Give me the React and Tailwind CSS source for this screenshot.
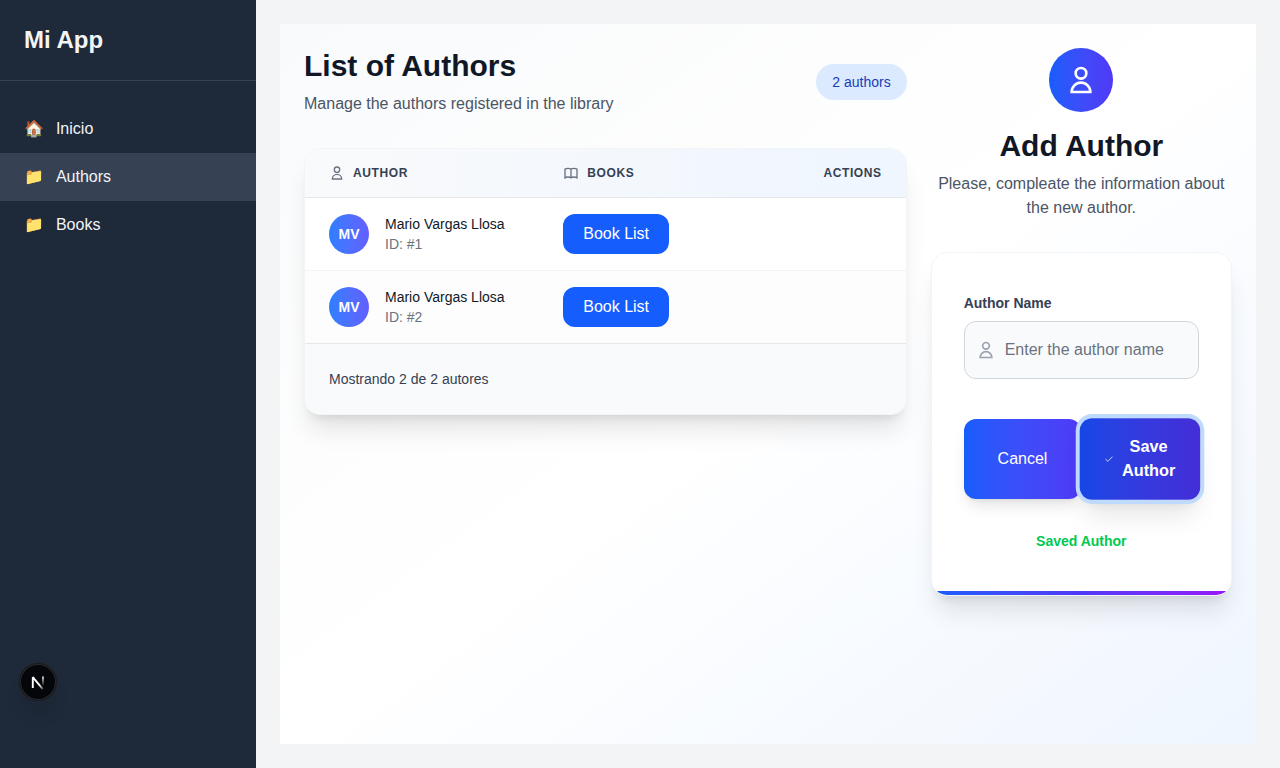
import React from 'react';

const authors = [
  { id: 1, name: 'Mario Vargas Llosa', initials: 'MV' },
  { id: 2, name: 'Mario Vargas Llosa', initials: 'MV' },
];

const links = [
  { label: 'Inicio', icon: '🏠', active: false },
  { label: 'Authors', icon: '📁', active: true },
  { label: 'Books', icon: '📁', active: false },
];

function Icon({ className, d, strokeWidth = 2 }) {
  return (
    <svg className={className} fill="none" stroke="currentColor" viewBox="0 0 24 24" aria-hidden="true">
      <path strokeWidth={strokeWidth} d={d} />
    </svg>
  );
}

const USER = 'M16 7a4 4 0 11-8 0 4 4 0 018 0zM12 14a7 7 0 00-7 7h14a7 7 0 00-7-7z';
const BOOK =
  'M12 6.253v13m0-13C10.832 5.477 9.246 5 7.5 5S4.168 5.477 3 6.253v13C4.168 18.477 5.754 18 7.5 18s3.332.477 4.5 1.253m0-13C13.168 5.477 14.754 5 16.5 5c1.747 0 3.332.477 4.5 1.253v13C19.832 18.477 18.247 18 16.5 18c-1.746 0-3.332.477-4.5 1.253';
const CHECK = 'M21 6L9 18l-6-6';

function Sidebar() {
  return (
    <aside className="w-64 shrink-0 bg-gray-800 text-gray-100">
      <div className="border-b border-gray-700 p-6">
        <h2 className="text-2xl font-bold">Mi App</h2>
      </div>
      <nav className="mt-6">
        {links.map((link) => (
          <a
            key={link.label}
            href="#"
            className={
              link.active
                ? 'flex items-center bg-gray-700 px-6 py-3'
                : 'flex items-center px-6 py-3 hover:bg-gray-700'
            }
          >
            <span className="mr-3">{link.icon}</span>
            {link.label}
          </a>
        ))}
      </nav>
    </aside>
  );
}

function AuthorsTable() {
  return (
    <section>
      <div className="mb-8 flex items-center justify-between">
        <div>
          <h1 className="text-3xl font-bold text-gray-900">List of Authors</h1>
          <p className="mt-2 text-gray-600">Manage the authors registered in the library</p>
        </div>
        <span className="rounded-full bg-blue-100 px-4 py-2 text-sm text-blue-800">
          {authors.length} authors
        </span>
      </div>
      <div className="overflow-hidden rounded-2xl border border-gray-100 bg-white shadow-xl">
        <table className="w-full">
          <thead>
            <tr className="border-b border-gray-200 bg-linear-to-r from-gray-50 to-blue-50 text-xs font-semibold tracking-wider text-gray-700 uppercase">
              <th scope="col" className="w-[39%] px-6 py-4 text-left">
                <div className="flex items-center gap-2">
                  <Icon className="size-4 text-gray-500" d={USER} />
                  Author
                </div>
              </th>
              <th scope="col" className="px-6 py-4 text-left">
                <div className="flex items-center gap-2">
                  <Icon className="size-4 text-gray-500" d={BOOK} />
                  Books
                </div>
              </th>
              <th scope="col" className="px-6 py-4 text-right">Actions</th>
            </tr>
          </thead>
          <tbody className="divide-y divide-gray-100">
            {authors.map((a) => (
              <tr key={a.id} className="even:bg-gray-50/30">
                <td className="px-6 py-4">
                  <div className="flex items-center gap-4">
                    <div className="flex size-10 items-center justify-center rounded-full bg-linear-to-r from-blue-500 to-indigo-500 text-sm font-semibold text-white">
                      {a.initials}
                    </div>
                    <div className="text-sm">
                      <div className="text-gray-900">{a.name}</div>
                      <div className="text-gray-500">ID: #{a.id}</div>
                    </div>
                  </div>
                </td>
                <td className="px-6 py-4">
                  <button type="button" className="block rounded-xl bg-blue-600 px-5 py-2 text-white">
                    Book List
                  </button>
                </td>
                <td className="px-6 py-4" />
              </tr>
            ))}
          </tbody>
        </table>
        <div className="border-t border-gray-200 bg-gray-50 px-6 py-6 text-sm leading-[22px] text-gray-700">
          Mostrando {authors.length} de {authors.length} autores
        </div>
      </div>
    </section>
  );
}

function AuthorForm() {
  return (
    <section>
      <div className="mb-8 text-center">
        <div className="mx-auto mb-4 flex size-16 items-center justify-center rounded-full bg-linear-to-r from-blue-600 to-indigo-600">
          <Icon className="size-8 text-white" d={USER} />
        </div>
        <h2 className="text-3xl font-bold text-gray-900">Add Author</h2>
        <p className="mt-2 text-gray-600">Please, compleate the information about the new author.</p>
      </div>
      <div className="overflow-hidden rounded-2xl border border-gray-100 bg-white shadow-xl">
        <form className="px-8 py-10" onSubmit={(e) => e.preventDefault()}>
          <label htmlFor="author-name" className="mb-2 block text-sm font-semibold text-gray-700">
            Author Name
          </label>
          <div className="relative">
            <div className="pointer-events-none absolute inset-y-0 left-0 flex items-center pl-3">
              <Icon className="size-5 text-gray-400" d={USER} />
            </div>
            <input
              id="author-name"
              type="text"
              placeholder="Enter the author name"
              className="block w-full rounded-xl border border-gray-300 bg-gray-50 py-4 pr-4 pl-10 text-gray-900 placeholder-gray-500"
            />
          </div>
          <div className="mt-10 grid grid-cols-2">
            <button
              type="button"
              className="rounded-xl bg-linear-to-r from-blue-600 to-indigo-600 px-6 py-4 text-white shadow-lg"
            >
              Cancel
            </button>
            <button
              type="submit"
              className="flex scale-[1.02] items-center justify-center gap-2 rounded-xl bg-linear-to-r from-blue-700 to-indigo-700 px-6 py-4 font-semibold text-white shadow-xl ring-4 ring-blue-200"
            >
              <Icon className="h-5 w-5" d={CHECK} />
              <span>Save Author</span>
            </button>
          </div>
          <p className="mt-8 text-center text-sm font-semibold text-green-500">Saved Author</p>
        </form>
        <div className="h-1 bg-linear-to-r from-blue-600 via-indigo-600 to-purple-600" />
      </div>
    </section>
  );
}

function DevBadge() {
  return (
    <button
      type="button"
      aria-label="Open developer tools"
      className="fixed bottom-[68px] left-5 flex size-9 items-center justify-center rounded-full bg-[#05060a] shadow-[0_0_0_1px_#1a1a1a,inset_0_0_0_1px_#2c2c2e,0_16px_24px_-8px_rgba(0,0,0,0.2)]"
    >
      <svg width="36" height="36" viewBox="0 0 36 36" fill="none" aria-hidden="true">
        <defs>
          <linearGradient id="stem" x1="23" y1="12" x2="23" y2="22" gradientUnits="userSpaceOnUse">
            <stop stopColor="#fff" />
            <stop offset="1" stopColor="#fff" stopOpacity="0" />
          </linearGradient>
          <linearGradient id="diagonal" x1="18" y1="18" x2="24" y2="26" gradientUnits="userSpaceOnUse">
            <stop offset="0.3" stopColor="#fff" />
            <stop offset="1" stopColor="#fff" stopOpacity="0.1" />
          </linearGradient>
        </defs>
        <path d="M23 12.4V21.5" stroke="url(#stem)" strokeWidth="1.7" />
        <path
          d="M12.8 24V13.2L22.8 25.2"
          stroke="url(#diagonal)"
          strokeWidth="1.9"
          strokeLinejoin="bevel"
        />
      </svg>
    </button>
  );
}

export default function App() {
  return (
    <div className="flex min-h-screen bg-gray-100 font-['Liberation_Sans',Arial,'Noto_Color_Emoji',sans-serif]">
      <Sidebar />
      <main className="flex min-w-0 flex-1 p-6">
        <div className="grid flex-1 grid-cols-[2fr_1fr] items-start gap-6 bg-linear-to-br from-gray-50 via-white to-blue-50 p-6">
          <AuthorsTable />
          <AuthorForm />
        </div>
      </main>
      <DevBadge />
    </div>
  );
}
